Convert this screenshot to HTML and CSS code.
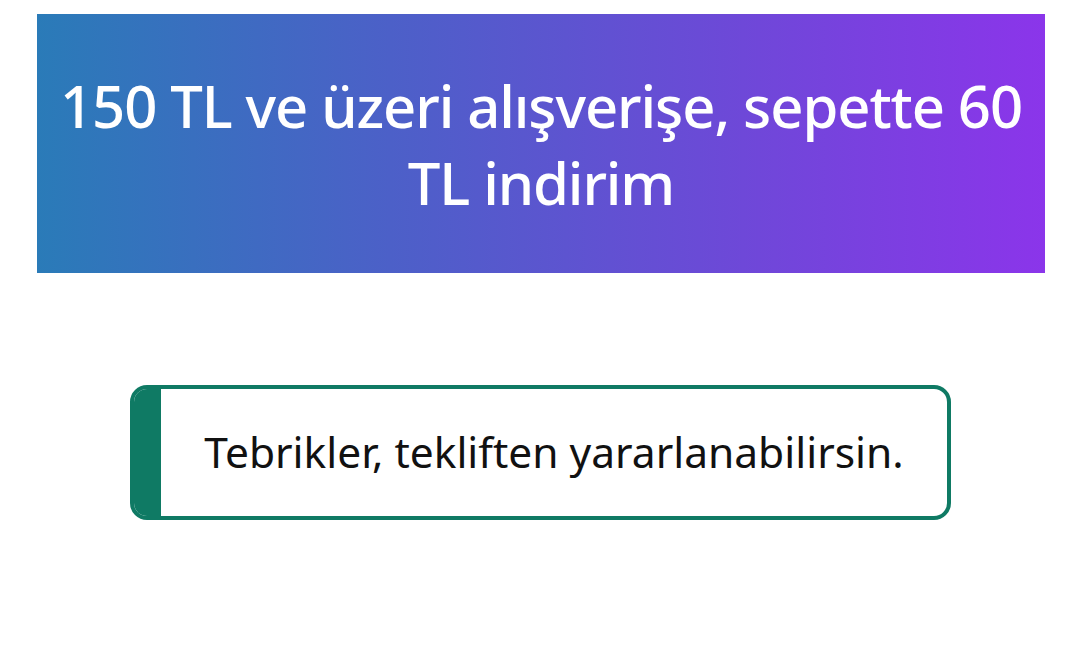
FILE: index.html
```html
<!DOCTYPE html>
<html lang="tr">
<head>
<meta charset="utf-8">
<link rel="stylesheet" href="styles.css">
</head>
<body>
<div class="page">
  <div class="banner">
    <h1 class="banner-title">150 TL ve üzeri alışverişe, sepette 60 TL indirim</h1>
  </div>
  <div class="notice">
    <div class="notice-stripe"></div>
    <div class="notice-body">Tebrikler, tekliften yararlanabilirsin.</div>
  </div>
  <p class="terms">Kampanya 31 Aralık tarihine kadar geçerlidir. Detaylı bilgi için tıklayın.</p>
</div>
</body>
</html>
```
FILE: styles.css
```css
html, body {
  margin: 0;
  padding: 0;
  background: #ffffff;
}
body {
  font-family: "Noto Sans", "Open Sans", "Liberation Sans", sans-serif;
  overflow: hidden;
  height: 655px;
}
.page {
  display: flex;
  flex-direction: column;
  align-items: center;
  padding-top: 14px;
  height: 641px;
  overflow: hidden;
}
.banner {
  box-sizing: border-box;
  width: 1008px;
  height: 259px;
  margin-left: 2px;
  flex: none;
  background: linear-gradient(90deg, #2a7bb8 0%, #4c60c8 35%, #6e48d8 70%, #8b35ea 100%);
  display: flex;
  align-items: center;
  justify-content: center;
  padding: 0 10px;
}
.banner-title {
  margin: 0;
  color: #ffffff;
  font-weight: 500;
  font-size: 58px;
  line-height: 77px;
  text-align: center;
  letter-spacing: -1.1px;
}
.notice {
  box-sizing: border-box;
  margin-top: 112px;
  width: 821px;
  height: 135px;
  flex: none;
  margin-left: 1px;
  border: 4px solid #0f7a64;
  border-radius: 17px;
  overflow: hidden;
  display: flex;
}
.notice-stripe {
  width: 27px;
  background: #0f7a64;
  flex: none;
}
.notice-body {
  flex: 1;
  display: flex;
  align-items: center;
  justify-content: center;
  color: #111111;
  font-size: 42.5px;
  padding-bottom: 2px;
}
.terms {
  margin: 124px 0 0;
  width: 1000px;
  color: #111111;
  font-size: 40px;
  text-align: center;
  flex: none;
}
```
